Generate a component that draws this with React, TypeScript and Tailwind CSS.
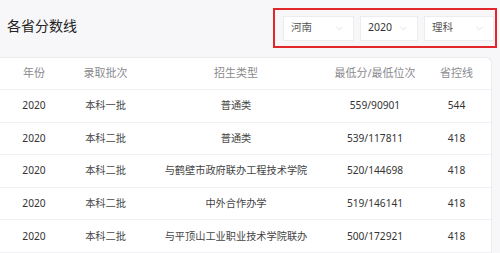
import { ChevronDown } from 'lucide-react';

const rows = [
  { year: '2020', batch: '本科一批', type: '普通类', score: '559/90901', line: '544' },
  { year: '2020', batch: '本科二批', type: '普通类', score: '539/117811', line: '418' },
  { year: '2020', batch: '本科二批', type: '与鹤壁市政府联办工程技术学院', score: '520/144698', line: '418' },
  { year: '2020', batch: '本科二批', type: '中外合作办学', score: '519/146141', line: '418' },
  { year: '2020', batch: '本科二批', type: '与平顶山工业职业技术学院联办', score: '500/172921', line: '418' },
];

const cols = 'grid grid-cols-[68px_75px_186px_92px_71px] items-center text-center';

function Select({ label, width, dark = false }: { label: string; width: string; dark?: boolean }) {
  return (
    <div className={`flex h-[25px] ${width} items-center justify-between border border-[#ececef] bg-white pl-[7px] pr-[8px]`}>
      <span className={`text-[10.5px] ${dark ? 'text-[#333]' : 'text-[#555]'}`}>{label}</span>
      <ChevronDown size={11} strokeWidth={1.2} className="text-[#c4c4c8]" />
    </div>
  );
}

export default function App() {
  return (
    <div
      className="h-[253px] w-[500px] overflow-hidden bg-[#f7f7f9]"
      style={{ fontFamily: '"Noto Sans", "Noto Sans CJK SC", sans-serif' }}
    >
      <div className="flex h-[57px] items-start justify-between">
        <h1 className="ml-[7px] mt-[16px] text-[14px] leading-[20px] text-[#222]">各省分数线</h1>
        <div className="mr-[3px] mt-[8px] flex h-[40px] w-[224px] items-center gap-[6px] border-2 border-[#e3262a] pl-[8px]">
          <Select label="河南" width="w-[71px]" />
          <Select label="2020" width="w-[58px]" dark />
          <Select label="理科" width="w-[70px]" />
        </div>
      </div>

      <div className="w-[492px] rounded-tr-[6px] border-r border-t border-[#ececef] bg-white">
        <div className={`${cols} h-[32px] border-b border-[#f0f0f2] text-[11px] text-[#8a8a8e]`}>
          <span>年份</span>
          <span>录取批次</span>
          <span>招生类型</span>
          <span>最低分/最低位次</span>
          <span>省控线</span>
        </div>
        {rows.map((r, i) => (
          <div key={i} className={`${cols} h-[32.6px] border-b border-[#f0f0f2] text-[10.2px] text-[#333]`}>
            <span>{r.year}</span>
            <span className="text-[#444]">{r.batch}</span>
            <span className="text-[#444]">{r.type}</span>
            <span>{r.score}</span>
            <span>{r.line}</span>
          </div>
        ))}
      </div>
    </div>
  );
}
